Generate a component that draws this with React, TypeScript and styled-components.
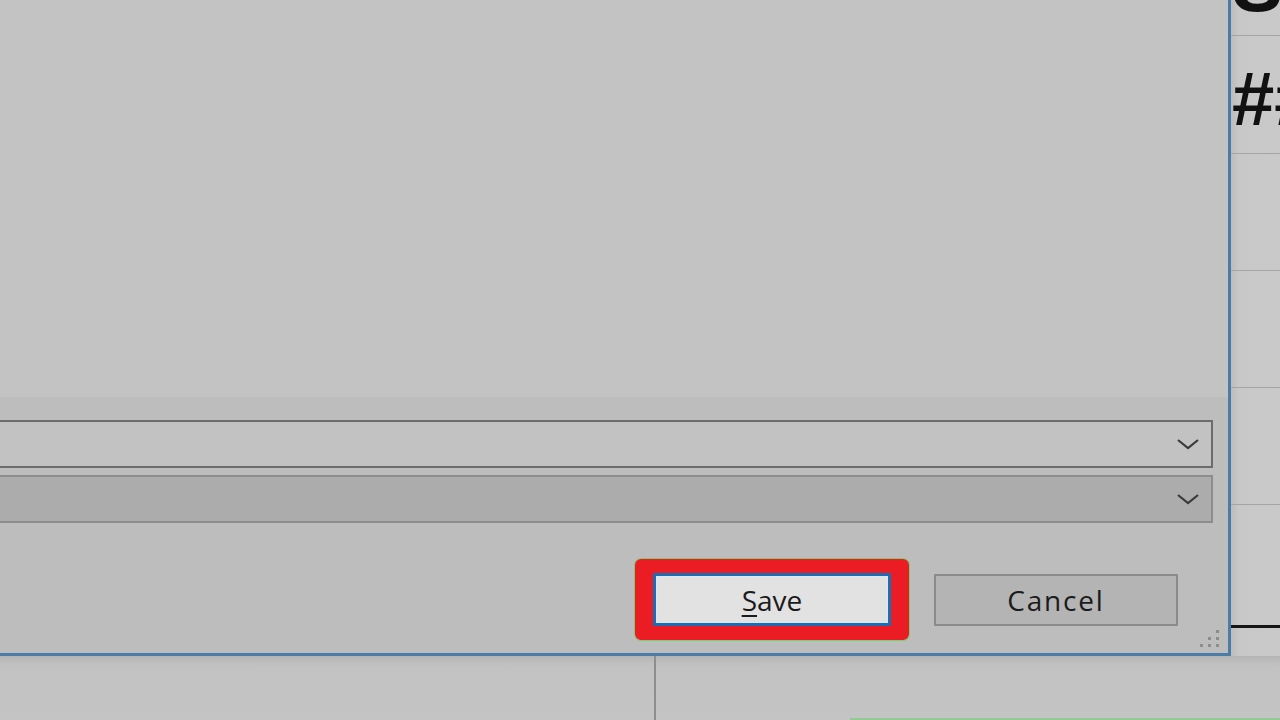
import React from "react";
import styled, { createGlobalStyle } from "styled-components";

const Global = createGlobalStyle`
  html, body { margin: 0; padding: 0; }
  body { width: 1280px; height: 720px; overflow: hidden; background: #c6c6c6; font-family: "Open Sans", "Liberation Sans", sans-serif; }
`;

const Screen = styled.div`
  width: 1280px;
  height: 720px;
  display: flex;
  flex-direction: column;
  overflow: hidden;
  background: #c6c6c6;
`;

const TopRow = styled.div`
  height: 656px;
  display: flex;
  flex-direction: row;
`;

const Dialog = styled.div`
  position: relative;
  width: 1228px;
  height: 653px;
  border-right: 3px solid #4b7ca8;
  border-bottom: 3px solid #4b7ca8;
  display: flex;
  flex-direction: column;
  background: #c3c3c3;
`;

const FileArea = styled.div`
  height: 397px;
  background: #c3c3c3;
`;

const BottomPanel = styled.div`
  flex: 1;
  background: #bdbdbd;
  display: flex;
  flex-direction: column;
  padding-top: 23px;
`;

const Combo = styled.div<{ $disabled?: boolean }>`
  height: 44px;
  margin-left: -10px;
  margin-right: 15px;
  margin-bottom: 7px;
  border: 2px solid ${(p) => (p.$disabled ? "#8d8d8d" : "#6c6c6c")};
  background: ${(p) => (p.$disabled ? "#acacac" : "#c2c2c2")};
  display: flex;
  align-items: center;
  justify-content: flex-end;
  padding-right: 11px;
`;

const ButtonRow = styled.div`
  display: flex;
  justify-content: flex-end;
  align-items: center;
  gap: 43px;
  padding-right: 50px;
  margin-top: 43px;
`;

const Button = styled.button<{ $primary?: boolean; $spacing?: number }>`
  position: relative;
  box-sizing: border-box;
  width: ${(p) => (p.$primary ? 238 : 244)}px;
  height: ${(p) => (p.$primary ? 53 : 52)}px;
  margin: 0;
  padding: 0;
  font-family: "Open Sans", "Liberation Sans", sans-serif;
  font-size: 28px;
  letter-spacing: ${(p) => p.$spacing ?? 0}px;
  color: #1b1b1b;
  background: ${(p) => (p.$primary ? "#e2e2e2" : "#b4b4b4")};
  border: ${(p) => (p.$primary ? "3px solid #1c6db3" : "2px solid #8b8b8b")};
  box-shadow: ${(p) => (p.$primary ? "inset 0 0 0 1px #d7e9f8" : "none")};
  display: flex;
  align-items: center;
  justify-content: center;
  line-height: 1;
  cursor: default;
`;

const Highlight = styled.span`
  position: absolute;
  left: -21px;
  right: -21px;
  top: -17px;
  bottom: -17px;
  border-style: solid;
  border-color: #ec1c24;
  border-width: 14px 18px;
  border-radius: 6px;
  box-shadow: 0 0 0 1px #6fd46f;
  pointer-events: none;
`;

const Mnemonic = styled.span`
  text-decoration: underline;
  text-underline-offset: 4px;
  text-decoration-thickness: 2px;
`;

const Grip = styled.div`
  position: absolute;
  right: 8px;
  bottom: 5px;
  width: 22px;
  height: 22px;
`;

const Sheet = styled.div`
  flex: 1;
  display: flex;
  flex-direction: column;
  background: linear-gradient(90deg, #bcbcbc 0px, #c8c8c8 8px, #c9c9c9 100%);
  overflow: hidden;
`;

const SheetCell = styled.div<{ $h: number; $thick?: boolean }>`
  height: ${(p) => p.$h}px;
  flex-shrink: 0;
  border-bottom: ${(p) => (p.$thick ? "3px solid #151515" : "1px solid #a5a5a5")};
  overflow: hidden;
  white-space: nowrap;
`;

const CellText = styled.div<{ $offset: number }>`
  font-family: "Liberation Sans", Arial, sans-serif;
  font-size: 76px;
  font-weight: 700;
  line-height: 76px;
  color: #111;
  margin-top: ${(p) => p.$offset}px;
  margin-left: 1px;
`;

const BottomStrip = styled.div`
  flex: 1;
  display: flex;
  background: linear-gradient(180deg, #b5b5b5 0px, #c2c2c2 10px, #c4c4c4 100%);
`;

const GridCol = styled.div<{ $w?: number }>`
  width: ${(p) => (p.$w ? `${p.$w}px` : "auto")};
  flex: ${(p) => (p.$w ? "none" : 1)};
  border-right: ${(p) => (p.$w ? "2px solid #8e8e8e" : "none")};
  display: flex;
  flex-direction: column;
  justify-content: flex-end;
`;

const Selection = styled.div`
  height: 2px;
  margin-left: 194px;
  background: #93c993;
`;

const Chevron = () => (
  <svg width="24" height="12" viewBox="0 0 24 12">
    <path d="M2 2 L12 10 L22 2" fill="none" stroke="#3a3a3a" strokeWidth="2.2" />
  </svg>
);

const GripDots = () => (
  <svg width="22" height="22" viewBox="0 0 22 22">
    {[
      [18, 4],
      [10, 11],
      [18, 11],
      [2, 18],
      [10, 18],
      [18, 18],
    ].map(([x, y], i) => (
      <rect key={i} x={x} y={y} width="3" height="3" fill="#8c8c8c" />
    ))}
  </svg>
);

export default function App() {
  return (
    <Screen>
      <Global />
      <TopRow>
        <Dialog>
          <FileArea />
          <BottomPanel>
            <Combo>
              <Chevron />
            </Combo>
            <Combo $disabled>
              <Chevron />
            </Combo>
            <ButtonRow>
              <Button $primary>
                <Highlight />
                <Mnemonic>S</Mnemonic>ave
              </Button>
              <Button $spacing={1.8}>Cancel</Button>
            </ButtonRow>
          </BottomPanel>
          <Grip>
            <GripDots />
          </Grip>
        </Dialog>
        <Sheet>
          <SheetCell $h={35}>
            <CellText $offset={-53}>S</CellText>
          </SheetCell>
          <SheetCell $h={117}>
            <CellText $offset={25}>##</CellText>
          </SheetCell>
          <SheetCell $h={116} />
          <SheetCell $h={116} />
          <SheetCell $h={116} />
          <SheetCell $h={120} $thick />
        </Sheet>
      </TopRow>
      <BottomStrip>
        <GridCol $w={654} />
        <GridCol>
          <Selection />
        </GridCol>
      </BottomStrip>
    </Screen>
  );
}
